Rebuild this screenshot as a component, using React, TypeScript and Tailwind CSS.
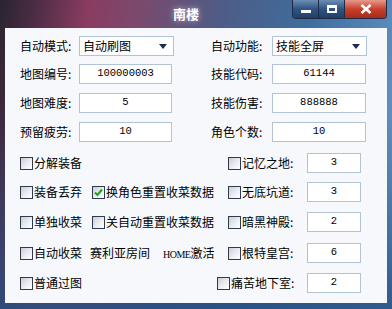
import React from "react";

const cjk = "font-['Noto_Sans_CJK_SC','Noto_Sans',sans-serif]";
const mono = "font-['Liberation_Mono',monospace]";

// Small checkbox, drawn like the old Windows one
function Box({ checked }: { checked?: boolean }) {
	return (
		<span className="w-[13px] h-[13px] shrink-0 border border-[#2f3a4a] bg-[linear-gradient(135deg,#c9cdd6_0%,#eef0f4_60%,#ffffff_100%)] flex items-center justify-center">
			{checked && (
				<svg width="9" height="9" viewBox="0 0 9 9">
					<path d="M1 4.5 L3.5 7 L8 1.5" fill="none" stroke="#21a121" strokeWidth="2" />
				</svg>
			)}
		</span>
	);
}

function Field({ value, width }: { value: string; width: string }) {
	return (
		<div className={`${width} h-[20px] border border-[#b3c3d6] bg-white flex items-center justify-center text-[10.5px] text-black ${mono}`}>
			{value}
		</div>
	);
}

function Combo({ value }: { value: string }) {
	return (
		<div className="w-[95px] h-[20px] border border-[#b3c3d6] bg-white flex items-center justify-between pl-[3px] pr-[6px] text-[12px] text-black">
			<span>{value}</span>
			<svg width="8" height="5" viewBox="0 0 8 5">
				<path d="M0 0 H8 L4 5 Z" fill="#1c2c4c" />
			</svg>
		</div>
	);
}

function Check({ label, checked, width }: { label: string; checked?: boolean; width: string }) {
	return (
		<div className={`${width} flex items-center gap-[1px] text-[12px] text-black`}>
			<Box checked={checked} />
			<span>{label}</span>
		</div>
	);
}

export default function App() {
	return (
		<div className={`w-[392px] h-[309px] flex flex-col ${cjk} bg-[linear-gradient(180deg,transparent_0%,transparent_35%,rgba(38,78,130,0.85)_100%),linear-gradient(100deg,#2a2430_0%,#4b2c44_8%,#8a3c60_20%,#7a4a6e_32%,#4e5c86_50%,#3f6d9e_70%,#6a9ccc_100%)]`}>
			{/* title bar */}
			<div className="relative h-[28px] shrink-0 flex items-center justify-center">
				<span className="text-white text-[13px] font-semibold ml-[-20px] [text-shadow:0_0_6px_rgba(255,255,255,0.6)]">南楼</span>
				<div className="absolute top-0 right-[5px] h-[19px] flex rounded-b-[4px] overflow-hidden border border-t-0 border-[#1d2c44]">
					<div className="w-[26px] h-full flex items-center justify-center bg-[linear-gradient(#6d8db4,#2f5482_50%,#203f68)] border-r border-[#1d2c44]">
						<span className="w-[10px] h-[3px] bg-white mt-[5px]" />
					</div>
					<div className="w-[26px] h-full flex items-center justify-center bg-[linear-gradient(#6d8db4,#2f5482_50%,#203f68)] border-r border-[#1d2c44]">
						<span className="w-[10px] h-[8px] border-2 border-white border-t-[3px]" />
					</div>
					<div className="w-[41px] h-full flex items-center justify-center bg-[linear-gradient(#e69a8c,#c8402c_50%,#a82a18)]">
						<svg width="12" height="10" viewBox="0 0 12 10">
							<path d="M1.5 1 L10.5 9 M10.5 1 L1.5 9" stroke="white" strokeWidth="2.6" />
						</svg>
					</div>
				</div>
			</div>

			{/* client area */}
			<div className="ml-[5px] w-[382px] h-[275px] bg-[#f7f8fb] pt-[8px] text-[12px] text-black flex flex-col">
				<div className="flex items-center h-[20px]">
					<span className="ml-[15px] w-[59px]">自动模式:</span>
					<Combo value="自动刷图" />
					<span className="ml-[37px] w-[61px]">自动功能:</span>
					<Combo value="技能全屏" />
				</div>
				<div className="flex items-center h-[20px] mt-[8px]">
					<span className="ml-[15px] w-[59px]">地图编号:</span>
					<Field value="100000003" width="w-[93px]" />
					<span className="ml-[39px] w-[61px]">技能代码:</span>
					<Field value="61144" width="w-[94px]" />
				</div>
				<div className="flex items-center h-[20px] mt-[9px]">
					<span className="ml-[15px] w-[59px]">地图难度:</span>
					<Field value="5" width="w-[93px]" />
					<span className="ml-[39px] w-[61px]">技能伤害:</span>
					<Field value="888888" width="w-[94px]" />
				</div>
				<div className="flex items-center h-[20px] mt-[9px]">
					<span className="ml-[15px] w-[59px]">预留疲劳:</span>
					<Field value="10" width="w-[93px]" />
					<span className="ml-[39px] w-[61px]">角色个数:</span>
					<Field value="10" width="w-[94px]" />
				</div>

				<div className="flex items-center h-[20px] mt-[11px]">
					<Check label="分解装备" width="ml-[15px] w-[208px]" />
					<Check label="记忆之地:" width="w-[79px]" />
					<Field value="3" width="w-[54px]" />
				</div>
				<div className="flex items-center h-[20px] mt-[9px]">
					<Check label="装备丢弃" width="ml-[15px] w-[72px]" />
					<Check label="换角色重置收菜数据" checked width="w-[136px]" />
					<Check label="无底坑道:" width="w-[79px]" />
					<Field value="3" width="w-[54px]" />
				</div>
				<div className="flex items-center h-[20px] mt-[10px]">
					<Check label="单独收菜" width="ml-[15px] w-[72px]" />
					<Check label="关自动重置收菜数据" width="w-[136px]" />
					<Check label="暗黑神殿:" width="w-[79px]" />
					<Field value="2" width="w-[54px]" />
				</div>
				<div className="flex items-center h-[20px] mt-[11px]">
					<Check label="自动收菜" width="ml-[15px] w-[70px]" />
					<span className="w-[73px]">赛利亚房间</span>
					<span className="w-[65px]">
						<span className="font-['Liberation_Serif',serif] text-[10px] tracking-[-0.5px]">HOME</span>激活
					</span>
					<Check label="根特皇宫:" width="w-[79px]" />
					<Field value="6" width="w-[54px]" />
				</div>
				<div className="flex items-center h-[20px] mt-[10px]">
					<Check label="普通过图" width="ml-[15px] w-[197px]" />
					<Check label="痛苦地下室:" width="w-[90px]" />
					<Field value="2" width="w-[54px]" />
				</div>
			</div>
		</div>
	);
}
